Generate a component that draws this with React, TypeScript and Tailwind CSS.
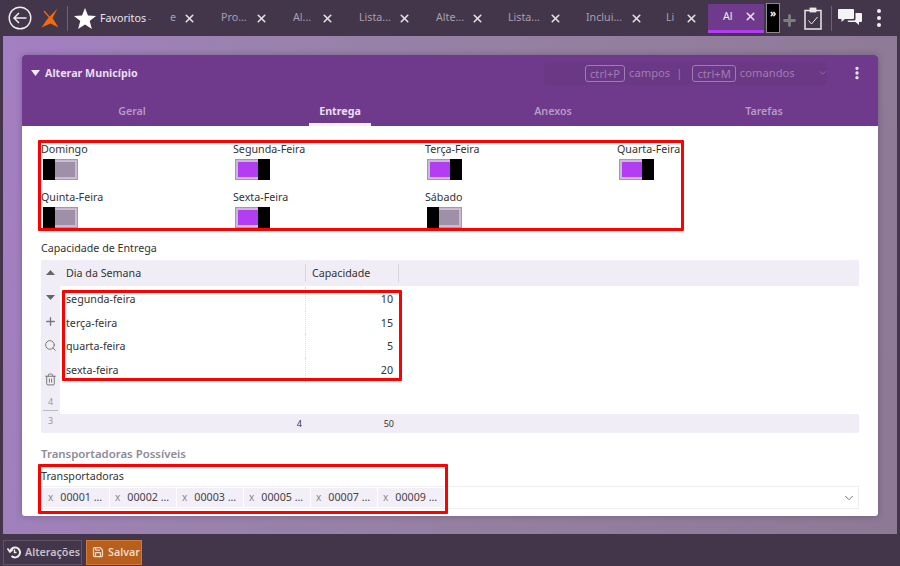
import React from "react";
import { ChevronDown, EllipsisVertical, Plus, Save, Search, Trash2, X } from "lucide-react";

const TABS = [
  { label: "e", width: "w-[47px]", gap: "pl-[14px]" },
  { label: "Pro...", width: "w-[72px]", gap: "pl-[18px]" },
  { label: "Al...", width: "w-[66px]", gap: "pl-[18px]" },
  { label: "Lista...", width: "w-[77px]", gap: "pl-[18px]" },
  { label: "Alte...", width: "w-[73px]", gap: "pl-[18px]" },
  { label: "Lista...", width: "w-[78px]", gap: "pl-[17px]" },
  { label: "Inclui...", width: "w-[81px]", gap: "pl-[17px]" },
  { label: "Li", width: "w-[55px]", gap: "pl-[16px]" },
];

const DAYS = [
  { label: "Domingo", on: false },
  { label: "Segunda-Feira", on: true },
  { label: "Terça-Feira", on: true },
  { label: "Quarta-Feira", on: true },
  { label: "Quinta-Feira", on: false },
  { label: "Sexta-Feira", on: true },
  { label: "Sábado", on: false },
];

const ROWS = [
  { day: "segunda-feira", value: 10 },
  { day: "terça-feira", value: 15 },
  { day: "quarta-feira", value: 5 },
  { day: "sexta-feira", value: 20 },
];

const CHIPS = ["00001 ...", "00002 ...", "00003 ...", "00005 ...", "00007 ...", "00009 ..."];

const Toggle = ({ on }: { on: boolean }) => (
  <div className="ml-[2px] flex h-[21px] w-[35px]">
    {!on && <div className="h-full w-[12px] shrink-0 bg-black" />}
    <div className={`h-full flex-1 border border-[#a795b2] ${on ? "border-r-0" : "border-l-0"}`}>
      <div className={`h-full border-2 border-[#c9bbd2] ${on ? "border-r-0 bg-[#b23df2]" : "border-l-0 bg-[#a08fa9]"}`} />
    </div>
    {on && <div className="h-full w-[12px] shrink-0 bg-black" />}
  </div>
);

const App = () => {
  return (
    <div className="relative flex h-[566px] w-[900px] flex-col overflow-hidden bg-[#43364a] font-['Noto_Sans',sans-serif] text-[10.7px] text-[#333]">
      {/* top bar */}
      <div className="flex h-[36px] shrink-0 items-center">
        <svg width="24" height="24" viewBox="0 0 24 24" className="ml-[8px] shrink-0" fill="none" stroke="#ededed" strokeWidth="1.4">
          <circle cx="12" cy="12" r="10.8" />
          <path d="M18.5 12H6M11 7l-5 5 5 5" strokeWidth="1.5" />
        </svg>
        <svg width="20" height="22" viewBox="0 0 20 22" className="ml-[8px] shrink-0">
          <path d="M17.5 1.5 L12.5 11 L18.5 20.5 L10.5 16.5 L1.5 20.5 L7 12.5 Z" fill="#f26b0f" />
          <path d="M4 4 L10 11" stroke="#f26b0f" strokeWidth="1.2" />
        </svg>
        <div className="ml-[7px] h-[25px] w-px shrink-0 bg-[#6d6274]" />
        <svg width="22" height="21" viewBox="0 0 22 21" className="ml-[6px] shrink-0">
          <path d="M11 0 L14 7.6 L22 8 L15.7 13 L17.9 21 L11 16.5 L4.1 21 L6.3 13 L0 8 L8 7.6 Z" fill="#ffffff" />
        </svg>
        <span className="ml-[4px] w-[48px] shrink-0 text-[#e8e4ea]">Favoritos</span>
        <span className="w-[6px] shrink-0 text-[10px] leading-none text-[#857b8c]">-</span>

        <div className="ml-[2px] flex h-full items-center">
          {TABS.map((tab, i) => (
            <div key={i} className={`flex h-[29px] items-center justify-between pr-[7px] ${tab.width} ${tab.gap}`}>
              <span className="pb-[2px] text-[#a89fb0]">{tab.label}</span>
              <X size={13} strokeWidth={3} className="text-[#e3dfe6]" />
            </div>
          ))}
          <div className="ml-[3px] flex h-[29px] w-[56px] items-center justify-between border-b-[3px] border-[#b23df2] bg-[#6f3a8b] pl-[15px] pr-[7px]">
            <span className="text-[#eee]">Al</span>
            <X size={13} strokeWidth={3} className="text-[#e3dfe6]" />
          </div>
          <div className="ml-[2px] flex h-[30px] w-[14px] justify-center border border-[#8a8a8a] bg-black pt-[2px] text-[10px] font-bold leading-[14px] text-white">
            »
          </div>
        </div>

        <Plus size={17} strokeWidth={4} className="ml-px mt-[5px] shrink-0 text-[#7d7d7d]" />
        <svg width="18" height="23" viewBox="0 0 18 23" className="ml-[6px] shrink-0" fill="none" stroke="#e8e8e8">
          <rect x="1" y="3.5" width="16" height="18.5" strokeWidth="1.5" />
          <rect x="6" y="1" width="6" height="4" fill="#e8e8e8" strokeWidth="0.8" />
          <path d="M4.5 13.5 L7.5 17 L13.5 10" strokeWidth="1" />
        </svg>
        <div className="ml-[9px] h-[25px] w-px shrink-0 bg-[#6d6274]" />
        <svg width="24" height="18" viewBox="0 0 24 18" className="ml-[6px] shrink-0" fill="#f4f4f4">
          <path d="M1 0 H15 Q16 0 16 1 V9 Q16 10 15 10 H7 L3.5 13 V10 H1 Q0 10 0 9 V1 Q0 0 1 0 Z" />
          <path d="M17.5 4 H23 Q24 4 24 5 V12 Q24 13 23 13 H21 V16 L17.5 13 H11 Q9.5 13 9.5 11.5 H16 Q17.5 11.5 17.5 10 Z" />
        </svg>
        <div className="ml-[15px] flex shrink-0 flex-col gap-[3px]">
          <span className="block h-[4px] w-[4px] rounded-full bg-[#efefef]" />
          <span className="block h-[4px] w-[4px] rounded-full bg-[#efefef]" />
          <span className="block h-[4px] w-[4px] rounded-full bg-[#efefef]" />
        </div>
      </div>

      {/* content */}
      <div className="mx-[3px] h-[498px] shrink-0 bg-[linear-gradient(100deg,#a47fc4_0%,#9a82ae_25%,#947f9f_60%,#8d7895_100%)] px-[19px] pt-[19px]">
        <div className="h-[461px] w-[856px] overflow-hidden rounded-[3px] bg-white shadow-[0_0_6px_rgba(60,40,70,0.35)]">
          <div className="h-[71px] bg-[#6f3a8b]">
            <div className="flex h-[36px] items-center">
              <svg width="9" height="6" viewBox="0 0 9 6" className="ml-[9px]">
                <path d="M0 0 H9 L4.5 6 Z" fill="#f1e9f6" />
              </svg>
              <span className="ml-[5px] font-bold text-[#e9dff0]">Alterar Município</span>
              <div className="ml-auto flex h-[23px] w-[283px] items-center rounded-[3px] bg-[#6b3886] pl-[41px] text-[11.2px] text-[#9e7cb1]">
                <span className="rounded-[3px] border border-[#9e7cb1] px-[4px] leading-[15px]">ctrl+P</span>
                <span className="ml-[4px]">campos</span>
                <span className="ml-[6px]">|</span>
                <span className="ml-[10px] rounded-[3px] border border-[#9e7cb1] px-[4px] leading-[15px]">ctrl+M</span>
                <span className="ml-[4px]">comandos</span>
                <ChevronDown size={14} strokeWidth={2} className="ml-[23px] text-[#9e7cb1]" />
              </div>
              <EllipsisVertical size={16} strokeWidth={3} className="ml-[22px] mr-[13px] text-[#eee]" />
            </div>
            <div className="grid h-[35px] grid-cols-4 items-end">
              <div className="flex justify-center pl-[6px]">
                <span className="pb-[7px] font-semibold text-[#b79ac8]">Geral</span>
              </div>
              <div className="flex justify-center pr-[6px]">
                <span className="border-b-[3px] border-[#f4f0f7] px-[10px] pb-[4px] font-bold text-[#e9dff0]">Entrega</span>
              </div>
              <div className="flex justify-center pr-[8px]">
                <span className="pb-[7px] font-semibold text-[#b79ac8]">Anexos</span>
              </div>
              <div className="flex justify-center pr-[14px]">
                <span className="pb-[7px] font-semibold text-[#b79ac8]">Tarefas</span>
              </div>
            </div>
          </div>

          <div className="px-[19px]">
            {/* week days */}
            <div className="grid grid-cols-[192px_192px_192px_192px] gap-y-[5.5px] pt-[16px]">
              {DAYS.map((d) => (
                <div key={d.label} className="flex h-[42px] flex-col">
                  <span className="h-[17px] whitespace-nowrap leading-[15px]">{d.label}</span>
                  <Toggle on={d.on} />
                </div>
              ))}
            </div>

            {/* capacity grid */}
            <div className="mt-[9.5px] h-[19px] leading-[15px]">Capacidade de Entrega</div>
            <div className="flex h-[173px] w-[818px] flex-col rounded-[2px] bg-[#f1edf6]">
              <div className="flex min-h-0 flex-1">
                <div className="flex w-[19px] shrink-0 flex-col items-center text-[#777]">
                  <svg width="9" height="5" viewBox="0 0 9 5" className="mt-[10px] shrink-0"><path d="M0 5 L4.5 0 L9 5 Z" fill="#666" /></svg>
                  <svg width="9" height="5" viewBox="0 0 9 5" className="mt-[20px] shrink-0"><path d="M0 0 H9 L4.5 5 Z" fill="#666" /></svg>
                  <Plus size={13} strokeWidth={2.5} className="mt-[15px] shrink-0" />
                  <Search size={13} strokeWidth={1.8} className="mt-[11px] shrink-0 text-[#777]" />
                  <Trash2 size={13} strokeWidth={1.8} className="mt-[21px] shrink-0" />
                  <span className="mt-[8px] h-[15px] text-[9px] leading-[15px] text-[#999]">4</span>
                  <div className="mt-px h-px w-[15px] shrink-0 bg-[#bbb]" />
                  <span className="mt-[2px] text-[9px] leading-[15px] text-[#999]">3</span>
                </div>
                <div className="flex min-w-0 flex-1 flex-col">
                  <div className="flex h-[26px] shrink-0 items-center">
                    <div className="flex h-[18px] w-[246px] items-center border-r border-[#d9d5de] pl-[6px]">Dia da Semana</div>
                    <div className="flex h-[18px] w-[93px] items-center border-r border-[#d9d5de] pl-[6px]">Capacidade</div>
                  </div>
                  <div className="h-[128px] shrink-0 bg-white pt-[1px]">
                    {ROWS.map((r) => (
                      <div key={r.day} className="flex h-[23.7px]">
                        <div className="flex w-[246px] items-center border-r border-dotted border-[#ddd] pl-[6px]">{r.day}</div>
                        <div className="flex w-[93px] items-center justify-end pr-[6px]">{r.value}</div>
                      </div>
                    ))}
                  </div>
                  <div className="flex flex-1 items-center text-[9px]">
                    <div className="w-[242px] text-right">4</div>
                    <div className="w-[92px] text-right">50</div>
                  </div>
                </div>
              </div>
            </div>

            {/* carriers */}
            <div className="mt-[12px] h-[17px] text-[11.4px] font-semibold leading-[17px] text-[#8b8b97]">Transportadoras Possíveis</div>
            <div className="mt-[7px] h-[16px] leading-[15px]">Transportadoras</div>
            <div className="mt-[1px] flex h-[23px] w-[818px] items-center border border-[#eeeeee] pl-px">
              {CHIPS.map((c) => (
                <div key={c} className="mr-px flex h-[19px] w-[66px] shrink-0 items-center bg-[#f3eff8] pl-[5px]">
                  <span className="text-[10px] text-[#888]">x</span>
                  <span className="ml-[7px] whitespace-nowrap text-[#444]">{c}</span>
                </div>
              ))}
              <ChevronDown size={14} strokeWidth={1.5} className="ml-auto mr-[2px] text-[#666]" />
            </div>
          </div>
        </div>
      </div>

      {/* bottom bar */}
      <div className="flex flex-1 items-center gap-[4px] pl-[3px] pt-[4px]">
        <div className="flex h-[25px] w-[79px] items-center border border-[#5f5466] pl-[3px] font-semibold text-[#c6c1ca]">
          <svg width="14" height="14" viewBox="0 0 14 14" fill="none" stroke="#f0f0f0" strokeWidth="2" className="shrink-0">
            <path d="M3 7a5 5 0 1 1 1.5 4" />
            <path d="M0.5 3.5 L3 7 L6 4.5" strokeWidth="1.6" />
            <path d="M7.5 4.5 V7.5 H9.5" strokeWidth="1.4" />
          </svg>
          <span className="ml-[4px]">Alterações</span>
        </div>
        <div className="flex h-[25px] w-[56px] items-center border border-[#d07a35] bg-[#b85f1e] pl-[5px] font-semibold text-[#f0d8c3]">
          <Save size={12} strokeWidth={2.5} />
          <span className="ml-[4px]">Salvar</span>
        </div>
      </div>

      {/* annotation boxes */}
      <div className="absolute left-[38px] top-[140px] h-[91px] w-[646px] rounded-[1px] border-[3px] border-[#ff0000]" />
      <div className="absolute left-[62px] top-[290px] h-[91px] w-[340px] rounded-[1px] border-[3px] border-[#ff0000]" />
      <div className="absolute left-[38px] top-[464px] h-[50px] w-[410px] rounded-[1px] border-[3px] border-[#ff0000]" />
    </div>
  );
};

export default App;
